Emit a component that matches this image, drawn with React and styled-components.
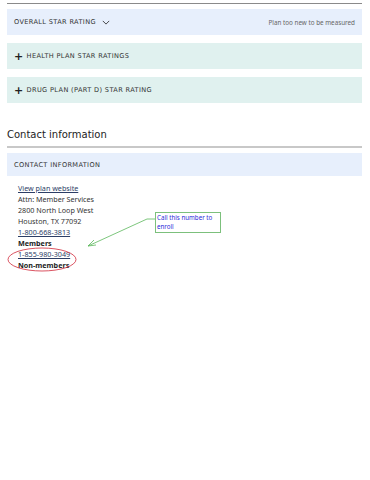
import React from 'react';
import styled, { createGlobalStyle } from 'styled-components';

const GlobalStyle = createGlobalStyle`
  body {
    margin: 0;
    background: #fff;
    font-family: 'Noto Sans', sans-serif;
  }
`;

function App() {
  return (
    <>
      <GlobalStyle />
      <Page>
        <TopRule />
        <Panel tone="blue">
          <PanelTitle>
            OVERALL STAR RATING
            <Chevron viewBox="0 0 10 6">
              <path d="M1 1l4 4 4-4" fill="none" stroke="#333" strokeWidth="1.1" />
            </Chevron>
          </PanelTitle>
          <Note>Plan too new to be measured</Note>
        </Panel>
        <Panel tone="teal">
          <PanelTitle>
            <Plus>+</Plus>HEALTH PLAN STAR RATINGS
          </PanelTitle>
        </Panel>
        <Panel tone="teal">
          <PanelTitle>
            <Plus>+</Plus>DRUG PLAN (PART D) STAR RATING
          </PanelTitle>
        </Panel>

        <Heading>Contact information</Heading>
        <HeadRule />
        <Panel tone="blue" small>
          <PanelTitle>CONTACT INFORMATION</PanelTitle>
        </Panel>

        <Contact>
          <LinkText>View plan website</LinkText>
          <span>Attn: Member Services</span>
          <span>2800 North Loop West</span>
          <span>Houston, TX 77092</span>
          <LinkText>1-800-668-3813</LinkText>
          <Strong>Members</Strong>
          <LinkText>1-855-980-3049</LinkText>
          <Strong>Non-members</Strong>

          <Callout>Call this number to enroll</Callout>
          <Marks viewBox="0 0 370 480">
            <path d="M155 219 L147 219 L88 246" fill="none" stroke="#5cb85c" strokeWidth="0.8" />
            <path d="M88 246 L94 240 M88 246 L96 245" fill="none" stroke="#5cb85c" strokeWidth="0.8" />
            <ellipse cx="42" cy="259.5" rx="34" ry="11.5" fill="none" stroke="#d0283a" strokeWidth="0.8" />
          </Marks>
        </Contact>
      </Page>
    </>
  );
}

const Page = styled.div`
  position: relative;
  width: 370px;
  height: 480px;
  padding: 3px 8px 0 7px;
  box-sizing: border-box;
`;

const TopRule = styled.div`
  height: 1px;
  background: #8a8a8a;
  margin-bottom: 5px;
`;

const Panel = styled.div`
  display: flex;
  align-items: center;
  justify-content: space-between;
  height: ${p => (p.small ? '23px' : '26px')};
  padding: 0 7px;
  margin-bottom: 8px;
  background: ${p => (p.tone === 'teal' ? '#e0f1ef' : '#e7effc')};
`;

const PanelTitle = styled.div`
  display: flex;
  align-items: center;
  font-family: 'DejaVu Sans', sans-serif;
  font-size: 6.6px;
  letter-spacing: 0.35px;
  color: #333;
`;

const Chevron = styled.svg`
  width: 8px;
  height: 5px;
  margin-left: 6px;
`;

const Plus = styled.span`
  font-family: 'DejaVu Sans', sans-serif;
  font-size: 11px;
  font-weight: bold;
  color: #222;
  margin-right: 3px;
  line-height: 1;
`;

const Note = styled.span`
  font-family: 'Noto Sans', sans-serif;
  font-size: 6.3px;
  color: #666;
`;

const Heading = styled.h2`
  margin: 26px 0 0;
  font-family: 'DejaVu Sans', sans-serif;
  font-weight: normal;
  font-size: 10px;
  color: #222;
`;

const HeadRule = styled.div`
  height: 2px;
  background: #c8c8c8;
  margin: 6px 0 5px;
`;

const Contact = styled.div`
  display: flex;
  flex-direction: column;
  align-items: flex-start;
  margin-top: -1px;
  padding: 0 11px;
  font-family: 'Noto Sans', sans-serif;
  font-size: 7.2px;
  line-height: 11px;
  color: #333;
`;

const LinkText = styled.span`
  color: #2c3e66;
  text-decoration: underline;
`;

const Strong = styled.span`
  font-weight: bold;
  color: #222;
`;

const Callout = styled.div`
  position: absolute;
  left: 155px;
  top: 212px;
  width: 62px;
  height: 17px;
  padding: 1px 1px;
  border: 1px solid #7cc07c;
  font-size: 6.2px;
  line-height: 8.5px;
  color: #2b2bd8;
  background: #fff;
`;

const Marks = styled.svg`
  position: absolute;
  left: 0;
  top: 0;
  width: 370px;
  height: 480px;
  pointer-events: none;
`;

export default App;
